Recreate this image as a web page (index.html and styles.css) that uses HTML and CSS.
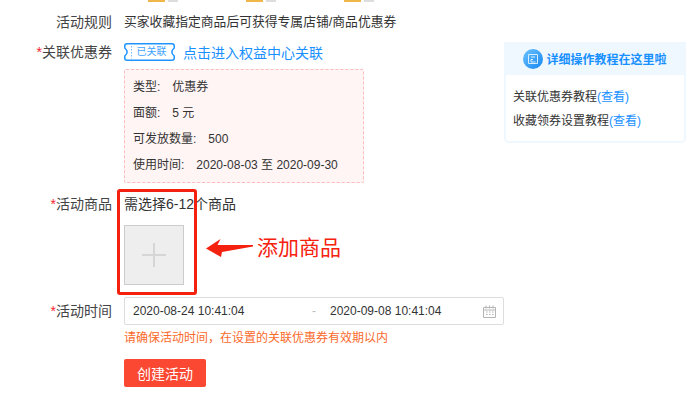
FILE: index.html
```html
<!DOCTYPE html>
<html lang="zh">
<head>
<meta charset="utf-8">
<title>创建活动</title>
<link rel="stylesheet" href="styles.css">
</head>
<body>
<div class="page">
  <div class="top-strip">
    <div class="stub"><i class="gold"></i><i class="grey"></i></div>
    <div class="stub"><i class="gold"></i><i class="grey"></i></div>
    <div class="stub"><i class="gold"></i><i class="grey"></i></div>
  </div>
  <div class="row row-rule">
    <div class="label">活动规则</div>
    <div class="content">买家收藏指定商品后可获得专属店铺/商品优惠券</div>
  </div>
  <div class="row row-coupon">
    <div class="label"><span class="req">*</span>关联优惠券</div>
    <div class="content">
      <div class="coupon-head">
        <span class="tag">
          <svg class="tag-bg" width="51" height="18" viewBox="0 0 51 18"><path d="M3 .75H48Q50.250 .75 50.250 3V5Q45.500 9 50.250 13V15Q50.250 17.250 48 17.250H3Q.75 17.250 .75 15V13Q5.500 9 .75 5V3Q.75 .75 3 .75Z" fill="#fff" stroke="#1f94ff" stroke-width="1.500"/><path d="M7.500 3V15.500" stroke="#6db9ff" stroke-dasharray="1.500 1.500" fill="none"/></svg>
          <span class="tag-text">已关联</span>
        </span>
        <a class="link big">点击进入权益中心关联</a>
      </div>
      <div class="coupon-box">
        <div class="coupon-line"><span class="k">类型:</span><span>优惠券</span></div>
        <div class="coupon-line"><span class="k">面额:</span><span>5 元</span></div>
        <div class="coupon-line"><span class="k">可发放数量:</span><span>500</span></div>
        <div class="coupon-line"><span class="k">使用时间:</span><span>2020-08-03 至 2020-09-30</span></div>
      </div>
    </div>
  </div>
  <div class="row row-goods">
    <div class="label"><span class="req">*</span>活动商品</div>
    <div class="content">
      <div class="hint">需选择6-12个商品</div>
      <div class="add-box">
        <svg width="24" height="24" viewBox="0 0 24 24"><path d="M12 0v24M0 12h24" stroke="#d6d6d6" stroke-width="2" fill="none"/></svg>
      </div>
      <div class="red-frame"></div>
      <div class="callout">
        <svg class="arrow" width="47" height="18" viewBox="0 0 47 18"><path d="M0 9.500 14.500 0 11.500 6 47 6 47 7.500 16 13 15 18Z" fill="#f5210f"/></svg>
        <span>添加商品</span>
      </div>
    </div>
  </div>
  <div class="row row-time">
    <div class="label"><span class="req">*</span>活动时间</div>
    <div class="content">
      <div class="range">
        <span class="date">2020-08-24 10:41:04</span>
        <span class="dash">-</span>
        <span class="date">2020-09-08 10:41:04</span>
        <svg class="cal" width="13" height="13" viewBox="0 0 13 13"><path d="M.5 2.500h12v10H.5zM3 .5v3M6.500 .5v3M10 .5v3M.5 5h12M3 7h1.500M6 7h1.500M9 7h1.500M3 9.500h1.500M6 9.500h1.500M9 9.500h1.500" stroke="#b5b5b5" fill="none"/></svg>
      </div>
      <div class="warn">请确保活动时间，在设置的关联优惠券有效期以内</div>
      <button class="submit" type="button">创建活动</button>
    </div>
  </div>
  <aside class="help">
    <div class="help-head">
      <svg width="20" height="20" viewBox="0 0 20 20"><defs><linearGradient id="g" x1="0" y1="0" x2="1" y2="1"><stop offset="0" stop-color="#6cc3ff"/><stop offset="1" stop-color="#1587f0"/></linearGradient></defs><circle cx="10" cy="10" r="10" fill="url(#g)"/><path d="M5.500 5.500h9v9h-9zM8 8h4M8 10.500h2M8 10.500v2.500h4.500" stroke="#d5edff" fill="none"/></svg>
      <span>详细操作教程在这里啦</span>
    </div>
    <div class="help-body">
      <div>关联优惠券教程<a class="link">(查看)</a></div>
      <div>收藏领券设置教程<a class="link">(查看)</a></div>
    </div>
  </aside>
</div>
</body>
</html>
```
FILE: styles.css
```css
* { box-sizing: border-box; }
html, body { margin: 0; padding: 0; background: #fff; }
body { font-family: "Liberation Sans", "Noto Sans CJK SC", sans-serif; font-size: 12px; color: #333; }
.page { position: relative; width: 697px; height: 407px; overflow: hidden; }
.top-strip { display: flex; height: 3px; padding-left: 148px; gap: 66px; }
.stub { display: flex; gap: 3px; width: 32px; }
.stub .gold { width: 17px; height: 2px; background: #f0b64a; }
.stub .grey { width: 10px; height: 2px; background: #ddd; }
.row { display: flex; }
.label { width: 112px; flex: none; text-align: right; font-size: 14px; line-height: 18px; color: #444; }
.req { color: #f5222d; }
.content { margin-left: 12px; position: relative; }
.row-rule { margin-top: 10px; line-height: 18px; }
.row-rule .content { font-size: 12.800px; line-height: 18px; }
.row-coupon { margin-top: 12px; }
.coupon-head { display: flex; align-items: center; height: 18px; gap: 8px; }
.tag { position: relative; width: 51px; height: 18px; display: block; }
.tag-bg { position: absolute; left: 0; top: 0; }
.tag-text { position: relative; display: block; padding-left: 4px; color: #3fa3ff; font-size: 10px; line-height: 18px; text-align: center; }
.link { color: #1890ff; }
.big { font-size: 14px; }
.coupon-box { margin-top: 8px; width: 240px; height: 114px; background: #fff5f4; border: 1px dashed #fbb; border-radius: 2px; padding: 8px 8px 0; font-size: 12px; }
.coupon-line { height: 26px; line-height: 18px; }
.k { margin-right: 12px; }
.row-goods { margin-top: 12px; }
.hint { line-height: 18px; font-size: 14px; white-space: nowrap; }
.add-box { margin-top: 12px; width: 60px; height: 60px; background: #eee; border: 1px solid #ccc; display: flex; align-items: center; justify-content: center; }
.red-frame { position: absolute; left: -7px; top: -6px; width: 80px; height: 106px; border: 3px solid #f5210f; border-radius: 3px; }
.callout { position: absolute; left: 82px; top: 36px; display: flex; align-items: center; gap: 4px; color: #f5210f; font-size: 21px; white-space: nowrap; }
.arrow { margin-top: 3px; }
.row-time { margin-top: 12px; }
.row-time .label { margin-top: 5px; }
.range { width: 380px; height: 28px; border: 1px solid #ddd; border-radius: 2px; display: flex; align-items: center; padding: 0 7px 0 8px; font-size: 12px; }
.date { width: 179px; flex: none; }
.dash { width: 18px; flex: none; color: #bbb; }
.date + .dash + .date { width: auto; }
.cal { margin-left: auto; }
.warn { margin-top: 5px; color: #fa6a2b; font-size: 12px; line-height: 16px; }
.submit { display: block; margin-top: 13px; width: 82px; height: 28px; border: 0; border-radius: 2px; background: #fa4832; color: #fff; font: inherit; font-size: 14px; }
.help { position: absolute; left: 504px; top: 42px; width: 182px; height: 101px; background: #fff; border: 2px solid #f0f8ff; border-radius: 5px; }
.help-head { height: 33px; background: #f0f8ff; margin: -2px -2px 0; display: flex; align-items: center; justify-content: center; gap: 3px; color: #1890ff; font-weight: bold; font-size: 12px; }
.help-body { padding: 10px 7px 0; line-height: 24px; font-size: 12px; }
```
